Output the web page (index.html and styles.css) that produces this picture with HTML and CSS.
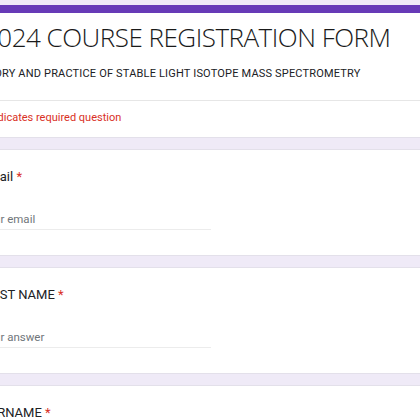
FILE: index.html
```html
<!DOCTYPE html>
<html>
<head>
<meta charset="utf-8">
<link rel="stylesheet" href="styles.css">
</head>
<body>
<div class="form">
  <div class="card header-card">
    <div class="header-main">
      <h1 class="title">2024 COURSE REGISTRATION FORM</h1>
      <p class="subtitle">THEORY AND PRACTICE OF STABLE LIGHT ISOTOPE MASS SPECTROMETRY</p>
    </div>
    <div class="header-note">
      <span class="req">* Indicates required question</span>
    </div>
  </div>
  <div class="card field">
    <div class="label">Email <span class="star">*</span></div>
    <div class="input"><span class="placeholder">Your email</span></div>
  </div>
  <div class="card field">
    <div class="label">FIRST NAME <span class="star">*</span></div>
    <div class="input"><span class="placeholder">Your answer</span></div>
  </div>
  <div class="card field">
    <div class="label">SURNAME <span class="star">*</span></div>
    <div class="input"><span class="placeholder">Your answer</span></div>
  </div>
</div>
</body>
</html>
```
FILE: styles.css
```css
html, body {
  margin: 0;
  padding: 0;
  background: #efeaf7;
  overflow: hidden;
  height: 420px;
}
body {
  font-family: Roboto, "Noto Sans", Arial, sans-serif;
  color: #202124;
}
.form {
  margin-left: -44px;
  width: 520px;
  padding-top: 5px;
  display: flex;
  flex-direction: column;
  gap: 11px;
}
.card {
  background: #fff;
  border: 1px solid #e3e0ea;
  border-radius: 8px;
}
.header-card {
  border-top: 8px solid #673ab7;
}
.header-main {
  padding: 8px 24px 0;
  height: 79px;
  border-bottom: 1px solid #e6e6e6;
}
.title {
  margin: 0 0 0 2px;
  font-family: "Open Sans", Roboto, sans-serif;
  font-weight: 300;
  font-size: 26px;
  line-height: 32px;
  letter-spacing: -0.5px;
  color: #1a1a1a;
}
.subtitle {
  margin: 13px 0 0 -8px;
  font-size: 11px;
  line-height: 16px;
  letter-spacing: 0.18px;
  color: #202124;
}
.header-note {
  padding: 9px 24px 11px;
  font-size: 11px;
  line-height: 16px;
}
.req {
  color: #d93025;
}
.field {
  padding: 17px 24px 25px;
}
.label {
  font-size: 13px;
  line-height: 20px;
  color: #202124;
}
.star {
  color: #d93025;
}
.input {
  margin-top: 22px;
  width: 230px;
  border-bottom: 1px solid #ececec;
  font-size: 11.5px;
  line-height: 20px;
}
.placeholder {
  color: #70757a;
}
```
